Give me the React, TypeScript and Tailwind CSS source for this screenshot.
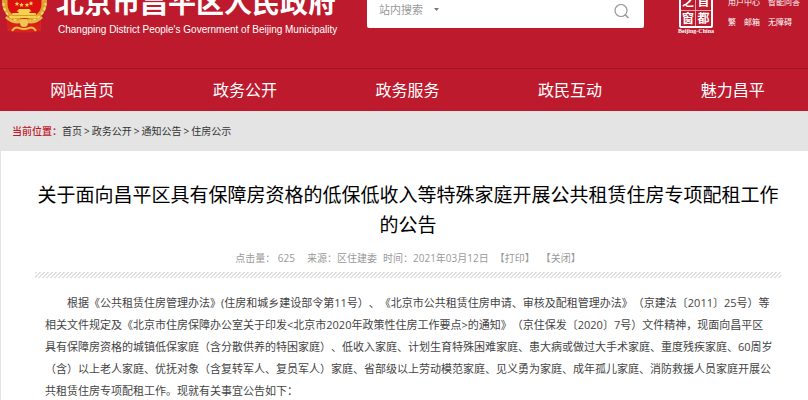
import type { ReactNode } from "react";

const navItems = ["网站首页", "政务公开", "政务服务", "政民互动", "魅力昌平"];
const crumbs = ["首页", "政务公开", "通知公告", "住房公示"];

const bodyLines = [
  "根据《公共租赁住房管理办法》(住房和城乡建设部令第11号）、《北京市公共租赁住房申请、审核及配租管理办法》（京建法〔2011〕25号）等",
  "相关文件规定及《北京市住房保障办公室关于印发<北京市2020年政策性住房工作要点>的通知》（京住保发〔2020〕7号）文件精神，现面向昌平区",
  "具有保障房资格的城镇低保家庭（含分散供养的特困家庭）、低收入家庭、计划生育特殊困难家庭、患大病或做过大手术家庭、重度残疾家庭、60周岁",
  "（含）以上老人家庭、优抚对象（含复转军人、复员军人）家庭、省部级以上劳动模范家庭、见义勇为家庭、成年孤儿家庭、消防救援人员家庭开展公",
  "共租赁住房专项配租工作。现就有关事宜公告如下：",
];

function Emblem() {
  return (
    <svg viewBox="0 0 48 34" className="h-[34px] w-12 shrink-0" aria-hidden="true">
      <path d="M7 18 L7.500 31 Q24 34 41 31 L41 18Z" fill="#d9231c" />
      <path d="M2 2a22.500 21 0 0 0 45 0V0H2z" fill="#dda22f" />
      <path d="M3.500 3a21 19 0 0 0 42 0" fill="none" stroke="#f6dc72" strokeWidth="2" strokeDasharray="3 2" />
      <path d="M7.500 0h34v4a17 15 0 0 1-34 0z" fill="#dc1010" />
      <g fill="#f5d24d">
        <path d="M17 1.500l.7 1.500 1.600.2-1.200 1.100.3 1.600-1.400-.8-1.400.8.3-1.600-1.200-1.100 1.600-.2z" />
        <path d="M21.500 2.500l.7 1.500 1.600.2-1.200 1.100.3 1.600-1.400-.8-1.400.8.3-1.600-1.200-1.100 1.600-.2z" />
        <path d="M27 2.500l.7 1.500 1.600.2-1.200 1.100.3 1.600-1.400-.8-1.400.8.3-1.600-1.200-1.100 1.600-.2z" />
        <path d="M31 1l.7 1.500 1.600.2-1.200 1.100.3 1.600-1.400-.8-1.400.8.3-1.600-1.200-1.100 1.600-.2z" />
        <path d="M19 9h10.500l2 2.500h-2V13h6l1.500 5h-26l1.500-5h6v-1.500h-2z" />
      </g>
      <path d="M12 15.500h24" stroke="#d89a2a" strokeWidth="1" />
      <path d="M8 20q8 3 16 2 8 1 16-2l-1 8q-6-2-9 1-3-2-6-2t-6 2q-3-3-9-1z" fill="#d41f1a" />
      <path d="M6 17q6 6 14 5l2-1h4l2 1q8 1 14-5" fill="none" stroke="#e9b944" strokeWidth="2.500" />
      <circle cx="24" cy="23" r="4" fill="#f0c552" />
      <path d="M12 31q3-5 7-3 5 2 10 0 4-2 7 3" fill="none" stroke="#eebb44" strokeWidth="2" />
    </svg>
  );
}

function Seal() {
  return (
    <div className="-mt-2 flex w-10 shrink-0 flex-col items-center">
      <div className="grid h-9 w-[34px] grid-cols-2 rounded-xs border-2 border-white text-center text-[12px] leading-4 font-bold">
        <span className="border-r border-b border-white/60">之</span>
        <span className="border-b border-white/60">首</span>
        <span className="border-r border-white/60">窗</span>
        <span>都</span>
      </div>
      <span className="font-['Liberation_Serif',serif] text-[6px] leading-[6px] font-bold whitespace-nowrap">
        Beijing-China
      </span>
    </div>
  );
}

function TopLink({ children }: { children: ReactNode }) {
  return (
    <a href="#" className="whitespace-nowrap">
      {children}
    </a>
  );
}

export default function App() {
  return (
    <div className="overflow-hidden bg-white font-['Open_Sans','Noto_Sans_CJK_SC',sans-serif] text-[#333]" lang="zh-CN">
      <header className="bg-[#bd1b2d] text-white">
        <div className="flex h-[68px] items-start overflow-hidden">
          <Emblem />
          <div className="ml-2 w-[279px] shrink-0">
            <h1 className="-mt-3.5 text-[28px] leading-8 font-bold whitespace-nowrap">北京市昌平区人民政府</h1>
            <p className="mt-1.5 pl-0.5 font-['Liberation_Sans',sans-serif] text-[10px] leading-3 whitespace-nowrap">
              Changping District People's Government of Beijing Municipality
            </p>
          </div>
          <form className="ml-8 flex h-7 w-[277px] shrink-0 items-start rounded-b-xs bg-white px-3 pr-[15px] text-[11px] leading-5 text-[#999]">
            <div className="relative w-[60px]">
              <select aria-label="搜索范围" className="block h-5 w-full appearance-none bg-transparent leading-5">
                <option>站内搜索</option>
              </select>
              <svg viewBox="0 0 5 3" className="pointer-events-none absolute top-2 right-0 h-[3px] w-[5px]" aria-hidden="true">
                <path d="M0 0h5L2.500 3z" fill="#777" />
              </svg>
            </div>
            <input type="text" aria-label="搜索" className="h-5 min-w-0 flex-1 outline-none" />
            <button type="button" aria-label="搜索" className="mt-1">
              <svg viewBox="0 0 15 15" className="size-[15px]" fill="none" stroke="#999" aria-hidden="true">
                <circle cx="7" cy="6.500" r="6" strokeWidth="1.200" />
                <path d="M11 10.500l3.500 3.500" strokeWidth="1.500" />
              </svg>
            </button>
          </form>
          <div className="ml-8 flex">
            <Seal />
            <div className="-mt-2 ml-3 text-[8px] leading-5">
              <div className="flex gap-2">
                <TopLink>用户中心</TopLink>
                <TopLink>智能问答</TopLink>
              </div>
              <div className="flex gap-2">
                <TopLink>繁</TopLink>
                <TopLink>邮箱</TopLink>
                <TopLink>无障碍</TopLink>
              </div>
            </div>
          </div>
        </div>
        <nav className="-mr-1.5 flex h-[43px] items-center border-t border-[#9c1624] pl-px">
          {navItems.map((item) => (
            <a key={item} href="#" className="flex-1 text-center text-[16px] leading-6">
              {item}
            </a>
          ))}
        </nav>
      </header>

      <div className="flex h-10 items-center bg-[#e4e4e4] pl-3 text-[10px] leading-4">
        <span className="font-medium text-[#bd1b2d]">当前位置：</span>
        {crumbs.map((crumb, i) => (
          <span key={crumb}>
            {i > 0 && <span className="mx-0.5">&gt;</span>}
            <a href="#">{crumb}</a>
          </span>
        ))}
      </div>

      <main className="border-l border-[#e4e4e4] pt-[29px] pr-[27px] pl-[34px]">
        <h2 className="text-center text-[19px] leading-[30px] text-black">
          关于面向昌平区具有保障房资格的低保低收入等特殊家庭开展公共租赁住房专项配租工作的公告
        </h2>
        <div className="mt-2 flex items-center justify-center gap-1.5 text-[10px] leading-5 text-[#999]">
          <span className="mr-1.5">点击量： 625</span>
          <span>来源：区住建委</span>
          <span>时间：2021年03月12日</span>
          <button type="button">【打印】</button>
          <button type="button">【关闭】</button>
        </div>
        <div className="mt-1 h-1.5 bg-[linear-gradient(135deg,#e0e0e0_25%,#fff_25%,#fff_50%,#e0e0e0_50%,#e0e0e0_75%,#fff_75%)] bg-size-[4px_4px]" />
        <p className="mt-3.5 pl-2.5 indent-[22px] text-[11px] leading-[22px] text-[#444] [text-spacing-trim:space-all]">
          {bodyLines.map((line) => (
            <span key={line} className="block whitespace-nowrap not-first:indent-0">
              {line}
            </span>
          ))}
        </p>
      </main>
    </div>
  );
}
